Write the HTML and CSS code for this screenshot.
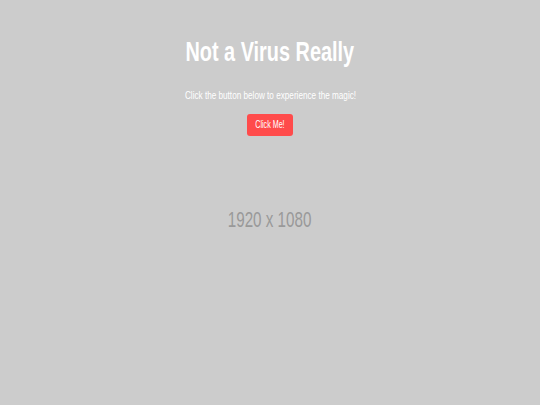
FILE: index.html
```html
<!DOCTYPE html>
<html lang="en">
<head>
<meta charset="utf-8">
<title>Not a Virus Really</title>
<link rel="stylesheet" href="styles.css">
</head>
<body>
<main class="page">
  <section class="hero">
    <h1 class="title">Not a Virus Really</h1>
    <p class="subtitle">Click the button below to experience the magic!</p>
    <button class="cta" type="button"><span class="cta-label">Click Me!</span></button>
  </section>
  <div class="placeholder">1920 x 1080</div>
</main>
</body>
</html>
```
FILE: styles.css
```css
html, body {
  margin: 0;
  padding: 0;
  height: 100%;
}
body {
  background: #cccccc;
  font-family: "Liberation Sans", Arial, sans-serif;
  color: #ffffff;
}
.page {
  display: flex;
  flex-direction: column;
  align-items: center;
  padding-top: 36px;
}
.hero {
  display: flex;
  flex-direction: column;
  align-items: center;
}
.title {
  margin: 0;
  font-size: 28px;
  line-height: 32px;
  font-weight: bold;
  white-space: nowrap;
  transform: scaleX(0.71);
}
.subtitle {
  margin: 20px 0 0;
  font-size: 11.5px;
  line-height: 14px;
  white-space: nowrap;
  transform: scaleX(0.71);
}
.cta {
  margin-top: 12px;
  width: 46px;
  height: 22px;
  padding: 0;
  border: none;
  border-radius: 3px;
  background: #ff4b4b;
  color: #ffffff;
  font-family: inherit;
  font-size: 10.2px;
  line-height: 22px;
  white-space: nowrap;
}
.cta-label {
  display: inline-block;
  transform: scaleX(0.7);
}
.placeholder {
  margin-top: 71px;
  font-size: 22px;
  line-height: 26px;
  color: #999999;
  white-space: nowrap;
  transform: scaleX(0.69);
}
```
